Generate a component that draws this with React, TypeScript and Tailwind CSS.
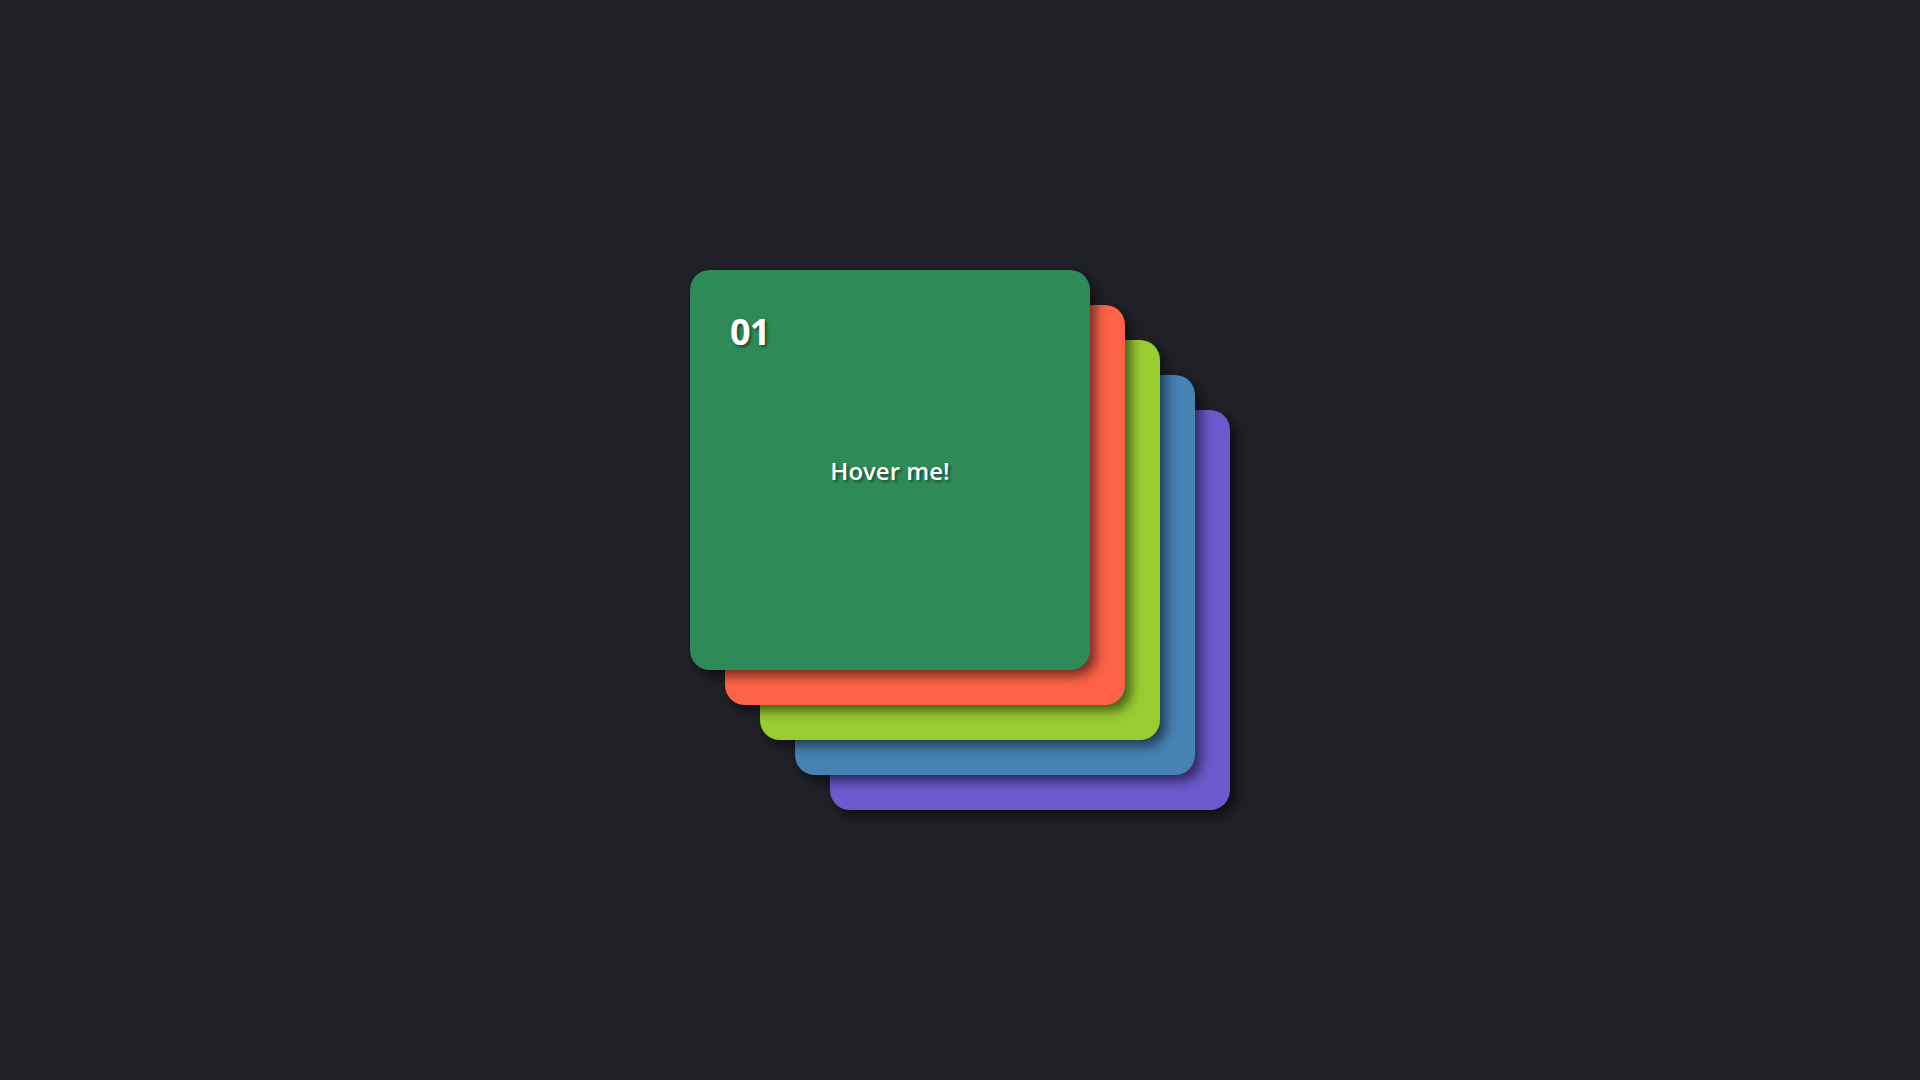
const cards = [
  { id: '05', color: 'bg-[#6a5acd]', offset: 'ml-[140px] mt-[140px]' },
  { id: '04', color: 'bg-[#4682b4]', offset: 'ml-[105px] mt-[105px]' },
  { id: '03', color: 'bg-[#9acd32]', offset: 'ml-[70px] mt-[70px]' },
  { id: '02', color: 'bg-[#ff6347]', offset: 'ml-[35px] mt-[35px]' },
  { id: '01', color: 'bg-[#2e8b57]', offset: 'ml-0 mt-0' },
] as const;

export default function App() {
  return (
    <div className="min-h-screen w-full bg-[#1f2126] flex items-center justify-center font-['Open_Sans',sans-serif] text-white">
      <div className="grid">
        {cards.map((card) => {
          const top = card.id === '01';
          return (
            <div
              key={card.id}
              className={`col-start-1 row-start-1 ${card.offset} ${card.color} w-[400px] h-[400px] rounded-[20px] shadow-[6px_6px_12px_rgba(0,0,0,0.55)] flex flex-col px-[40px] pt-[44px]`}
            >
              {top && (
                <>
                  <span className="text-[36px] font-bold leading-none tracking-tight [text-shadow:2px_2px_3px_rgba(0,0,0,0.45)]">
                    {card.id}
                  </span>
                  <span className="mt-[109px] self-center text-[24px] font-semibold leading-none [text-shadow:2px_2px_3px_rgba(0,0,0,0.45)]">
                    Hover me!
                  </span>
                </>
              )}
            </div>
          );
        })}
      </div>
    </div>
  );
}
